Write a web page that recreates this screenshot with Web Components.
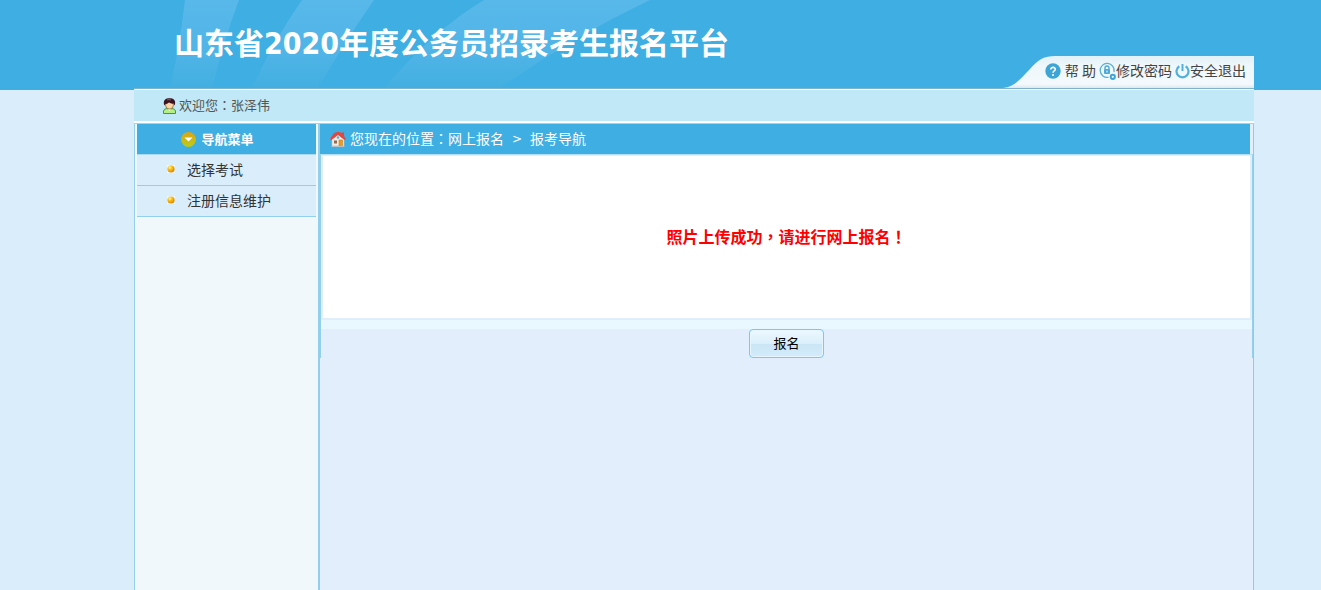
<!DOCTYPE html>
<html lang="zh-CN">
<head>
<meta charset="utf-8">
<meta name="viewport" content="width=device-width, initial-scale=1">
<title>山东省2020年度公务员招录考生报名平台</title>
<style>
html, body { height: 100%; }
body {
  margin: 0;
  background: #d9edfb;
  font-family: "Noto Sans CJK SC", sans-serif;
  font-size: 14px;
  --blue: #3faee2;
  --line: #93d0ee;
  --punct: "Noto Sans CJK TC", sans-serif;
}
</style>
</head>
<body>
<exam-app></exam-app>

<template id="app-tpl">
  <style>
    :host { display: grid; grid-template-columns: 134px minmax(0, 1fr) 67px; grid-template-rows: auto 1fr; min-height: 100%; }
    .band { grid-column: 1 / -1; grid-row: 1; height: 90px; background: var(--blue); }
    .page { grid-column: 2; grid-row: 1 / 3; display: flex; flex-direction: column; }
    .body { flex: 1; display: grid; grid-template-columns: 186px minmax(0, 1fr); border-top: 1px solid #9fd4ee; }
  </style>
  <div class="band"></div>
  <div class="page">
    <site-header>山东省2020年度公务员招录考生报名平台</site-header>
    <welcome-bar>张泽伟</welcome-bar>
    <div class="body">
      <side-menu></side-menu>
      <main-panel></main-panel>
    </div>
  </div>
</template>

<template id="header-tpl">
  <style>
    :host { display: grid; grid-template-columns: 1fr auto; align-items: end; height: 88px; border-bottom: 1px solid #7db4cc; background: var(--blue); }
    .art { grid-area: 1 / 1 / 2 / 3; align-self: start; width: 600px; height: 88px; }
    h1 { grid-area: 1 / 1; align-self: start; margin: 0; padding: 21px 0 0 40px; font: bold 30px/46px "DejaVu Sans Condensed", "Noto Sans CJK SC", sans-serif; color: #fff; white-space: nowrap; }
    tool-links { grid-area: 1 / 2; }
  </style>
  <svg class="art" viewBox="0 0 600 88" aria-hidden="true">
    <defs>
      <linearGradient id="g" x1="0" y1="0" x2="0" y2="1">
        <stop offset="0" stop-color="#58b8ea"/><stop offset=".6" stop-color="#50b4e7"/><stop offset="1" stop-color="#42afe0"/>
      </linearGradient>
    </defs>
    <path fill="url(#g)" d="M51 0H105Q90 40 78 88H36Q46 45 51 0Z"/>
    <path fill="url(#g)" d="M168 0H240Q212 40 184 88H118Q140 40 168 0Z"/>
    <path fill="url(#g)" d="M350 0H516Q440 36 366 88H250Q300 30 350 0Z"/>
  </svg>
  <h1><slot></slot></h1>
  <tool-links></tool-links>
</template>

<template id="tools-tpl">
  <style>
    :host { display: grid; width: 251px; height: 32px; }
    .tab { grid-area: 1 / 1; width: 251px; height: 32px; }
    nav { grid-area: 1 / 1; display: flex; align-items: center; justify-content: flex-end; padding: 0 8px 2px 0; }
    a { display: flex; align-items: center; color: #444; text-decoration: none; font-size: 14px; line-height: 20px; white-space: pre; }
    a + a { margin-left: 3px; }
    span { padding-bottom: 2px; }
    svg { display: block; }
    .help { gap: 4px; }
  </style>
  <svg class="tab" viewBox="0 0 251 32" aria-hidden="true">
    <defs><linearGradient id="t" x1="0" y1="0" x2="0" y2="1"><stop offset="0" stop-color="#e2f1f8"/><stop offset=".3" stop-color="#eff7fb"/><stop offset=".88" stop-color="#f3f9fc"/><stop offset="1" stop-color="#dde9ee"/></linearGradient></defs>
    <path fill="url(#t)" d="M0 32C12 31 18 22 27 13C36 3 41 0 52 0H251V32Z"/>
  </svg>
  <nav>
    <a class="help" href="#help"><svg width="16" height="16" viewBox="0 0 16 16" aria-hidden="true"><circle cx="8" cy="8" r="7.7" fill="#3da5d6"/><path d="M5.8 6.4C5.8 3.7 10.4 3.8 10.3 6.4C10.2 8 8 7.9 8 9.7" fill="none" stroke="#fff" stroke-width="1.600"/><circle cx="8" cy="12" r="1" fill="#fff"/></svg><span>帮 助</span></a>
    <a href="#password"><svg width="17" height="18" viewBox="0 0 17 18" aria-hidden="true"><path d="M15 10A7 7 0 1 0 9.500 15.300" fill="none" stroke="#55aedb" stroke-width="1.300"/><path d="M6 7.500V6a2 2 0 0 1 4 0v1.500" fill="none" stroke="#4aa9d8" stroke-width="1.400"/><rect x="5" y="7" width="6" height="5" rx="1" fill="#4aa9d8"/><path d="M8 8.500v2" stroke="#fff"/><circle cx="13.800" cy="14.800" r="2.100" fill="none" stroke="#3da5d6" stroke-width="2"/></svg><span>修改密码</span></a>
    <a href="#logout"><svg width="15" height="16" viewBox="0 0 15 16" aria-hidden="true"><path d="M4.300 3.200A6 6 0 1 0 10.700 3.200" fill="none" stroke="#52b0dc" stroke-width="2.200"/><path d="M7.500 1v7" stroke="#52b0dc" stroke-width="2"/></svg><span>安全退出</span></a>
  </nav>
</template>

<template id="welcome-tpl">
  <style>
    :host { display: flex; align-items: center; height: 31px; padding-left: 28px; border-top: 1px solid #fff; border-bottom: 2px solid #fff; background: #c0e8f6; color: #555; font-size: 13px; line-height: 20px; }
    svg { margin-right: 2px; }
    .text { padding-bottom: 2px; }
    .p { font-family: var(--punct); }
  </style>
  <svg width="15" height="16" viewBox="0 0 15 16" aria-hidden="true">
    <path d="M1.500 15.500V13Q2 10.800 5 10.500L7.500 12L10 10.500Q13 10.800 13.500 13V15.500Z" fill="#b5ef87" stroke="#3f9e26"/>
    <path d="M5.500 10.500L7.500 13L9.500 10.500Z" fill="#fff"/>
    <circle cx="7.500" cy="7" r="4" fill="#fbd5a2" stroke="#8b5433" stroke-width=".7"/>
    <path d="M2.300 7.500C.5 2 4 .3 7.500 .3S14.500 2 12.700 7.500L11.500 5.500Q9 6 7 4.500Q5 6 3.500 6Z" fill="#3b1420"/>
    <path d="M5 2Q7 1 9 2" stroke="#89545d" fill="none"/>
  </svg>
  <span class="text">欢迎您<span class="p" lang="zh-TW">：</span><slot></slot></span>
</template>

<template id="menu-tpl">
  <style>
    :host { display: block; border-left: 1px solid var(--line); border-right: 2px solid #90cfee; padding: 0 2px 0 2px; background: #f0f8fc; }
    h2 { display: flex; align-items: center; justify-content: center; gap: 5px; height: 30px; margin: 0; padding-right: 18px; box-sizing: border-box; background: var(--blue); color: #fff; font-size: 13px; line-height: 20px; }
    ul { list-style: none; margin: 0; padding: 0; border-top: 1px solid #a9d9f1; }
    li { border-bottom: 1px solid var(--line); background: #d9edfb; }
  </style>
  <nav>
    <h2><svg width="15" height="15" viewBox="0 0 15 15" aria-hidden="true"><defs><linearGradient id="y" x1="0" y1="0" x2="0" y2="1"><stop offset="0" stop-color="#dba414"/><stop offset="1" stop-color="#b9cd1c"/></linearGradient></defs><circle cx="7.500" cy="7.500" r="7.400" fill="url(#y)"/><path d="M3.500 5.500H11.500L7.500 9.500Z" fill="#fff"/></svg>导航菜单</h2>
    <ul>
      <li><menu-link href="#exam">选择考试</menu-link></li>
      <li><menu-link href="#profile">注册信息维护</menu-link></li>
    </ul>
  </nav>
</template>

<template id="link-tpl">
  <style>
    :host { display: block; }
    a { display: flex; align-items: center; height: 28px; padding: 0 0 2px 30px; gap: 12px; color: #333; text-decoration: none; line-height: 20px; }
  </style>
  <a><svg width="8" height="8" viewBox="0 0 8 8" aria-hidden="true"><defs><radialGradient id="o" cx=".35" cy=".3" r=".75"><stop offset="0" stop-color="#fff6a8"/><stop offset=".4" stop-color="#f8bd15"/><stop offset="1" stop-color="#d98200"/></radialGradient></defs><rect width="8" height="8" fill="#fff" opacity=".5"/><circle cx="4" cy="4" r="3.600" fill="url(#o)"/></svg><slot></slot></a>
</template>

<template id="main-tpl">
  <style>
    :host { display: block; background: #e2eefb; border-right: 1px solid #93c9e8; }
    .crumb { display: flex; align-items: center; height: 30px; margin-right: 3px; padding-left: 10px; background: var(--blue); color: #fff; line-height: 20px; white-space: pre; }
    .crumb svg { margin-right: 4px; }
    .crumb a { color: inherit; text-decoration: none; }
    .text { padding-bottom: 2px; }
    .sep { width: 26px; text-align: center; font-family: "DejaVu Sans", sans-serif; font-size: 12px; }
    .p { font-family: var(--punct); }
    .frame { border-left: 1px solid #93d0ee; border-right: 1px solid #93d0ee; border-top: 1px solid #b5def3; }
    .card { display: flex; align-items: center; justify-content: center; box-sizing: border-box; height: 165px; margin: 0; padding-bottom: 2px; border: 2px solid #e0eefa; border-top-width: 1px; background: #fff; color: #f00; font-size: 16px; font-weight: bold; line-height: 24px; }
    .gap { height: 9px; background: #e9f7fe; }
    .actions { display: flex; justify-content: center; }
    button { width: 75px; height: 29px; padding: 0 0 2px; border: 1px solid #7cc8ea; border-radius: 4px; background: linear-gradient(#edf8fe, #daeffb 50%, #cae5f6 51%, #d4ebfa); box-shadow: inset 0 0 0 1px #e6f6fe; color: #000; font: 13px/20px "Noto Sans CJK SC", sans-serif; }
  </style>
  <div class="crumb"><svg width="16" height="16" viewBox="0 0 16 16" aria-hidden="true"><path d="M2 8L8 3L14 8V15H2Z" fill="#f3ebe5" stroke="#c8c0bd" stroke-width=".6"/><path d="M12 1.500H14V6H12Z" fill="#d94840"/><path d="M0 8L4 2L8 .8L12 2L16 8L14.500 9L8 4L1.500 9Z" fill="#e24842"/><rect x="9" y="9" width="3.500" height="6" fill="#f39a1c" stroke="#bd7111" stroke-width=".5"/><rect x="4" y="9.500" width="3" height="3" fill="#8b6b54"/><circle cx="8" cy="6.500" r="1.200" fill="#48aee0"/><path d="M1.500 15.300H14.500" stroke="#cbc6c5"/></svg><span class="text">您现在的位置<span class="p" lang="zh-TW">：</span></span><a class="text" href="#signup">网上报名</a><span class="sep">&gt;</span><span class="text">报考导航</span></div>
  <div class="frame">
    <p class="card"><span>照片上传成功<span class="p" lang="zh-TW">，</span>请进行网上报名<span class="p" lang="zh-TW">！</span></span></p>
    <div class="gap"></div>
    <div class="actions"><button type="button">报名</button></div>
  </div>
</template>

<script>
const define = (tag, tpl, setup) => customElements.define(tag, class extends HTMLElement {
  constructor() {
    super();
    this.attachShadow({ mode: "open" }).append(document.getElementById(tpl).content.cloneNode(true));
  }
  connectedCallback() { if (setup) setup(this); }
});
define("menu-link", "link-tpl", el => el.shadowRoot.querySelector("a").setAttribute("href", el.getAttribute("href")));
define("tool-links", "tools-tpl");
define("site-header", "header-tpl");
define("welcome-bar", "welcome-tpl");
define("side-menu", "menu-tpl");
define("main-panel", "main-tpl");
define("exam-app", "app-tpl");
</script>
</body>
</html>
